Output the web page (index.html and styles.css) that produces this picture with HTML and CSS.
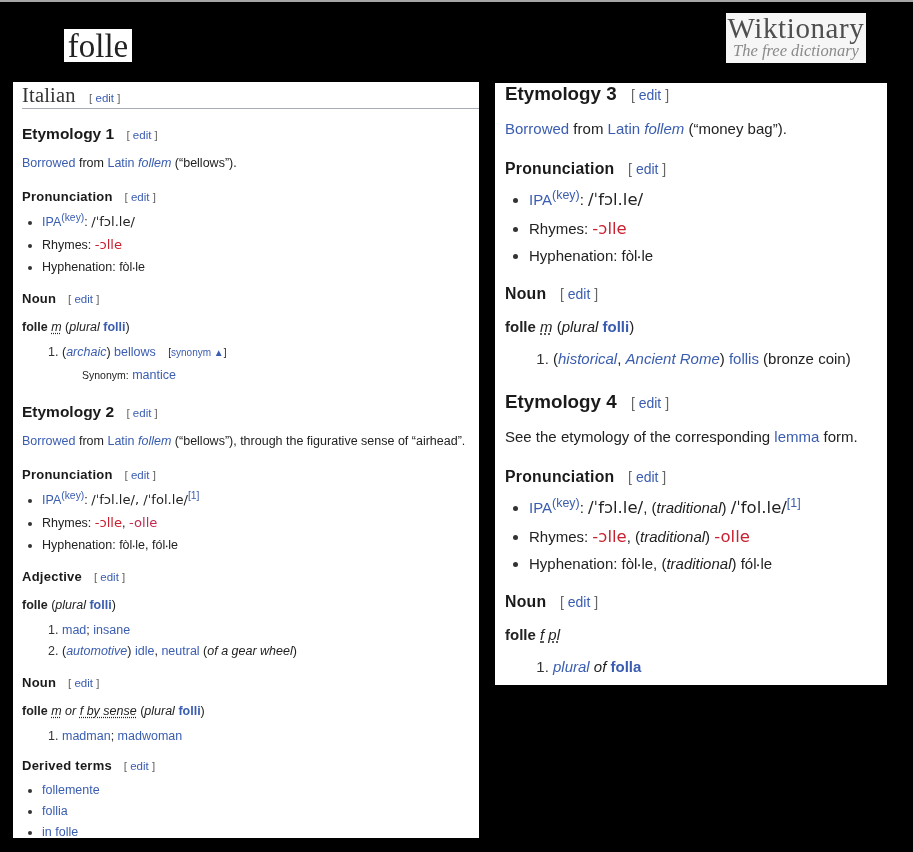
FILE: index.html
```html
<!DOCTYPE html>
<html lang="en">
<head>
<meta charset="utf-8">
<title>folle</title>
<link rel="stylesheet" href="styles.css">
</head>
<body>
<div class="page">
  <div class="col col-left">
    <div class="head head-left"><div class="word">folle</div></div>
    <main class="panel left">
      <h2>Italian <span class="edit">[ <a>edit</a> ]</span></h2>
      <h3>Etymology 1 <span class="edit">[ <a>edit</a> ]</span></h3>
      <p><a>Borrowed</a> from <a>Latin</a> <i class="mention">follem</i> (“bellows”).</p>
      <h4>Pronunciation <span class="edit">[ <a>edit</a> ]</span></h4>
      <ul class="pron">
        <li class="ipa-row"><a>IPA</a><sup><a>(key)</a></sup>: <span class="ipa">/ˈfɔl.le/</span></li>
        <li>Rhymes: <a class="ipa red">-ɔlle</a></li>
        <li>Hyphenation: fòl‧le</li>
      </ul>
      <h4>Noun <span class="edit">[ <a>edit</a> ]</span></h4>
      <div class="hw"><b>folle</b> <i class="abbr">m</i> (<i>plural</i> <b><a>folli</a></b>)</div>
      <ol>
        <li>(<i><a>archaic</a></i>) <a>bellows</a> <span class="syn">[<a>synonym ▲</a>]</span>
          <div class="synrow"><span class="synlabel">Synonym:</span> <a>mantice</a></div>
        </li>
      </ol>
      <h3 class="after-list">Etymology 2 <span class="edit">[ <a>edit</a> ]</span></h3>
      <p><a>Borrowed</a> from <a>Latin</a> <i class="mention">follem</i> (“bellows”), through the figurative sense of “airhead”.</p>
      <h4>Pronunciation <span class="edit">[ <a>edit</a> ]</span></h4>
      <ul class="pron">
        <li class="ipa-row"><a>IPA</a><sup><a>(key)</a></sup>: <span class="ipa">/ˈfɔl.le/, /ˈfol.le/</span><sup><a>[1]</a></sup></li>
        <li>Rhymes: <a class="ipa red">-ɔlle</a>, <a class="ipa crimson">-olle</a></li>
        <li>Hyphenation: fòl‧le, fól‧le</li>
      </ul>
      <h4>Adjective <span class="edit">[ <a>edit</a> ]</span></h4>
      <div class="hw"><b>folle</b> (<i>plural</i> <b><a>folli</a></b>)</div>
      <ol>
        <li><a>mad</a>; <a>insane</a></li>
        <li>(<i><a>automotive</a></i>) <a>idle</a>, <a>neutral</a> (<i>of a gear wheel</i>)</li>
      </ol>
      <h4>Noun <span class="edit">[ <a>edit</a> ]</span></h4>
      <div class="hw"><b>folle</b> <i class="abbr">m</i> <i>or</i> <i class="abbr">f by sense</i> (<i>plural</i> <b><a>folli</a></b>)</div>
      <ol>
        <li><a>madman</a>; <a>madwoman</a></li>
      </ol>
      <h4 class="derived">Derived terms <span class="edit">[ <a>edit</a> ]</span></h4>
      <ul class="terms">
        <li><a>follemente</a></li>
        <li><a>follia</a></li>
        <li><a>in folle</a></li>
      </ul>
    </main>
  </div>
  <div class="col col-right">
    <div class="head head-right">
      <div class="logo">
        <div class="logo-name">Wiktionary</div>
        <div class="logo-tag">The free dictionary</div>
      </div>
    </div>
    <section class="panel right">
      <h3 class="first">Etymology 3 <span class="edit">[ <a>edit</a> ]</span></h3>
      <p><a>Borrowed</a> from <a>Latin</a> <i class="mention">follem</i> (“money bag”).</p>
      <h4>Pronunciation <span class="edit">[ <a>edit</a> ]</span></h4>
      <ul class="pron">
        <li class="ipa-row"><a>IPA</a><sup><a>(key)</a></sup>: <span class="ipa">/ˈfɔl.le/</span></li>
        <li>Rhymes: <a class="ipa red">-ɔlle</a></li>
        <li>Hyphenation: fòl‧le</li>
      </ul>
      <h4>Noun <span class="edit">[ <a>edit</a> ]</span></h4>
      <div class="hw"><b>folle</b> <i class="abbr">m</i> (<i>plural</i> <b><a>folli</a></b>)</div>
      <ol>
        <li>(<i><a>historical</a></i>, <i><a>Ancient Rome</a></i>) <a>follis</a> (bronze coin)</li>
      </ol>
      <h3 class="after-list">Etymology 4 <span class="edit">[ <a>edit</a> ]</span></h3>
      <p>See the etymology of the corresponding <a>lemma</a> form.</p>
      <h4>Pronunciation <span class="edit">[ <a>edit</a> ]</span></h4>
      <ul class="pron">
        <li class="ipa-row"><a>IPA</a><sup><a>(key)</a></sup>: <span class="ipa">/ˈfɔl.le/</span>, (<i>traditional</i>) <span class="ipa">/ˈfol.le/</span><sup><a>[1]</a></sup></li>
        <li>Rhymes: <a class="ipa red">-ɔlle</a>, (<i>traditional</i>) <a class="ipa red">-olle</a></li>
        <li>Hyphenation: fòl‧le, (<i>traditional</i>) fól‧le</li>
      </ul>
      <h4>Noun <span class="edit">[ <a>edit</a> ]</span></h4>
      <div class="hw"><b>folle</b> <i class="abbr">f</i> <i class="abbr">pl</i></div>
      <ol>
        <li><i><a>plural</a> of</i> <b><a>folla</a></b></li>
      </ol>
    </section>
  </div>
</div>
</body>
</html>
```

FILE: styles.css
```css
* { box-sizing: border-box; }
html, body { margin: 0; padding: 0; background: #000; }
body { height: 852px; overflow: hidden; font-family: "Liberation Sans", Arial, sans-serif; }
.page {
  display: flex;
  height: 852px;
  border-top: 2px solid #a6a6a6;
  padding-left: 13px;
  gap: 16px;
}
.col { display: flex; flex-direction: column; }
.col-left { width: 466px; }
.col-right { width: 392px; }
.head { display: flex; align-items: flex-start; }
.head-left { height: 80px; padding: 27px 0 0 51px; }
.head-right { height: 81px; padding: 11px 0 0 231px; }
.word {
  width: 68px;
  height: 33px;
  background: #fff;
  color: #222;
  font: 33px/34px "Liberation Serif", serif;
  text-align: center;
  filter: blur(.4px);
}
.logo {
  width: 140px;
  height: 50px;
  background: #f6f6f6;
  text-align: center;
  filter: blur(.5px);
}
.logo-name {
  font: 29px/27px "Liberation Serif", serif;
  letter-spacing: .6px;
  color: #4f4f4f;
  padding-top: 2px;
  height: 29px;
}
.logo-tag {
  font: italic 16.5px/18px "Liberation Serif", serif;
  color: #8a8a8a;
}
.panel {
  background: #fff;
  color: #222;
  overflow: hidden;
  filter: blur(.4px);
}
.left {
  height: 756px;
  padding-left: 9px;
  font-size: 12.5px;
  line-height: 20px;
  --lh: 20px;
  --h3-gap: 15px;
  --p-gap: 8px;
  --h4-gap: 12px;
  --p-extra: 2px;
  --h3-extra: 5px;
  --list-gap: 5px;
  --pron-li: 2px;
  --ipa-li: 3px;
  --li: 1px;
  --hw-gap: 8px;
  --ol-gap: 5px;
  --ul-pad: 20px;
  --ol-pad: 40px;
  --h3-size: 15.5px;
  --h4-size: 13px;
  --edit-size: 11.5px;
  --edit-gap: 8px;
  --ipa-size: 105%;
}
.right {
  height: 602px;
  padding-left: 10px;
  font-size: 15px;
  line-height: 24px;
  --lh: 24px;
  --h3-gap: 19px;
  --p-gap: 10px;
  --h4-gap: 14px;
  --p-extra: 2px;
  --h3-extra: 5px;
  --list-gap: 7px;
  --pron-li: 3px;
  --ipa-li: 5px;
  --li: 1px;
  --hw-gap: 9px;
  --ol-gap: 8px;
  --ul-pad: 24px;
  --ol-pad: 48px;
  --h3-size: 18.8px;
  --h4-size: 15.8px;
  --edit-size: 14px;
  --edit-gap: 9px;
  --ipa-size: 110%;
}
a { color: #3a5db0; }
h2, h3, h4, p { margin: 0; }
h2 {
  height: 27px;
  border-bottom: 1px solid #a9acb8;
  font: 400 20.5px/26px "Liberation Serif", serif;
  color: #333;
  letter-spacing: .2px;
}
h3 {
  margin-top: var(--h3-gap);
  font-size: var(--h3-size);
  line-height: var(--lh);
  color: #1a1a1a;
}
h3.first { margin-top: -1px; }
h3.after-list { margin-top: calc(var(--h4-gap) + var(--h3-extra)); }
h4 {
  margin-top: var(--h4-gap);
  font-size: var(--h4-size);
  line-height: var(--lh);
  color: #1a1a1a;
  letter-spacing: .25px;
}
p + h4 { margin-top: calc(var(--h4-gap) + var(--p-extra)); }
h4.derived { margin-top: calc(var(--h4-gap) - 2px); }
.edit {
  margin-left: var(--edit-gap);
  font-size: var(--edit-size);
  font-weight: 400;
  color: #666;
  letter-spacing: 0;
}
h2 .edit { font-family: "Liberation Sans", Arial, sans-serif; }
p { margin-top: var(--p-gap); }
.mention { color: #3a5db0; }
ul, ol { margin: var(--list-gap) 0 0; }
ul { padding-left: var(--ul-pad); }
ul.terms { margin-top: 4px; }
ol { padding-left: var(--ol-pad); margin-top: var(--ol-gap); }
li { margin-bottom: var(--li); }
li::marker { color: #333; }
.pron li { margin-bottom: var(--pron-li); }
.pron li.ipa-row { margin-bottom: var(--ipa-li); }
sup { font-size: 83%; line-height: 0; }
.ipa { font-family: "DejaVu Sans", sans-serif; font-size: var(--ipa-size); }
.red { color: #c8202f; }
.crimson { color: #c22a52; }
.hw { margin-top: var(--hw-gap); }
.abbr { text-decoration: underline dotted; text-underline-offset: 2px; }
.syn { margin-left: 9px; font-size: 10px; }
.synrow { margin-top: 2px; padding-left: 20px; }
.synlabel { font-size: 10.5px; }
```
